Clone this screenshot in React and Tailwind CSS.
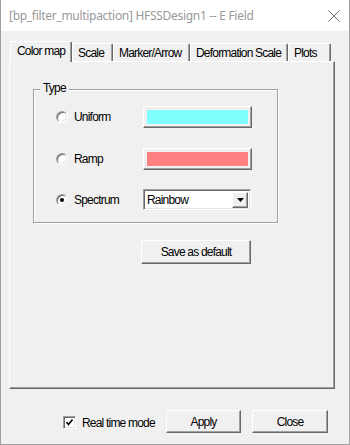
import React from "react";

const raised =
  "border-t border-l border-t-white border-l-white border-r border-b border-r-[#696969] border-b-[#696969] shadow-[inset_-1px_-1px_0_#a0a0a0]";

function Radio({ checked }) {
  return (
    <div className="w-[12px] h-[12px] rounded-full border border-t-[#a0a0a0] border-l-[#a0a0a0] border-b-white border-r-white bg-white shadow-[inset_1px_1px_0_#696969,inset_-1px_-1px_0_#e3e3e3] flex items-center justify-center shrink-0">
      {checked && <div className="w-[4px] h-[4px] rounded-full bg-black" />}
    </div>
  );
}

function ColorButton({ color }) {
  return (
    <div className={`w-[109px] h-[22px] bg-[#f0f0f0] p-[3px] ${raised}`}>
      <div className={`w-full h-full ${color}`} />
    </div>
  );
}

function Tab({ label, w, selected }) {
  if (selected) {
    return (
      <div
        className={`${w} h-[21px] -mb-[1px] relative z-10 bg-[#f0f0f0] border-t border-l border-white border-r border-r-[#696969] shadow-[inset_-1px_0_0_#a0a0a0] rounded-t-[2px] flex items-center pl-[6px] pb-[2px] whitespace-nowrap`}
      >
        {label}
      </div>
    );
  }
  return (
    <div
      className={`${w} h-[18px] bg-[#f0f0f0] border-t border-l border-white border-r border-r-[#696969] shadow-[inset_-1px_0_0_#a0a0a0] rounded-t-[2px] flex items-center pl-[5px] whitespace-nowrap overflow-hidden`}
    >
      {label}
    </div>
  );
}

export default function App() {
  return (
    <div
      className="w-[350px] h-[445px] bg-[#f0f0f0] border-l border-r border-b border-[#a0a0a0] flex flex-col text-[12px] tracking-[-0.8px] text-black overflow-hidden"
      style={{ fontFamily: '"Liberation Sans", Arial, sans-serif' }}
    >
      {/* Title bar */}
      <div className="h-[31px] bg-white flex items-center justify-between pl-[8px] pr-[8px] shrink-0">
        <span
          className="text-[12px] text-[#999999] tracking-[-0.3px]"
          style={{ fontFamily: '"Noto Sans", "Open Sans", sans-serif' }}
        >
          [bp_filter_multipaction] HFSSDesign1 -- E Field
        </span>
        <svg width="12" height="12" viewBox="0 0 12 12" className="mr-[1px]">
          <path d="M0.5 0.5 L11.5 11.5 M11.5 0.5 L0.5 11.5" stroke="#6b6b6b" strokeWidth="1" />
        </svg>
      </div>

      {/* Body */}
      <div className="flex flex-col pl-[8px] pt-[10px]">
        {/* Tabs */}
        <div className="flex items-end pl-[1px] h-[20px]">
          <Tab label="Color map" w="w-[62px]" selected />
          <Tab label="Scale" w="w-[41px]" />
          <Tab label="Marker/Arrow" w="w-[77px]" />
          <Tab label="Deformation Scale" w="w-[98px]" />
          <Tab label="Plots" w="w-[43px]" />
        </div>

        {/* Panel */}
        <div className={`w-[326px] h-[328px] flex flex-col pl-[23px] pt-[27px] ${raised}`}>
          {/* Group box */}
          <div className="relative w-[245px] h-[134px] border border-[#a0a0a0] shadow-[inset_1px_1px_0_#fff,1px_1px_0_#fff] flex flex-col pl-[22px]">
            <span className="absolute -top-[9px] left-[6px] bg-[#f0f0f0] px-[3px] leading-[15px]">
              Type
            </span>
            <div className="flex items-center h-[22px] mt-[16px]">
              <Radio />
              <span className="ml-[6px] w-[69px]">Uniform</span>
              <ColorButton color="bg-[#80ffff]" />
            </div>
            <div className="flex items-center h-[22px] mt-[20px]">
              <Radio />
              <span className="ml-[6px] w-[69px]">Ramp</span>
              <ColorButton color="bg-[#ff8080]" />
            </div>
            <div className="flex items-center h-[21px] mt-[19px]">
              <Radio checked />
              <span className="ml-[6px] w-[69px]">Spectrum</span>
              <div className="w-[108px] h-[21px] bg-white border border-t-[#a0a0a0] border-l-[#a0a0a0] border-b-white border-r-white shadow-[inset_1px_1px_0_#696969,inset_-1px_-1px_0_#e3e3e3] flex items-center justify-between pl-[3px] pr-[2px]">
                <span>Rainbow</span>
                <div className={`w-[16px] h-[16px] bg-[#f0f0f0] flex items-center justify-center ${raised}`}>
                  <svg width="7" height="4" viewBox="0 0 7 4">
                    <path d="M0 0 H7 L3.5 4 Z" fill="#000" />
                  </svg>
                </div>
              </div>
            </div>
          </div>

          {/* Save as default */}
          <div className="pl-[108px] mt-[17px]">
            <div className={`w-[110px] h-[24px] bg-[#f0f0f0] flex items-center justify-center ${raised}`}>
              Save as default
            </div>
          </div>
        </div>

        {/* Bottom row */}
        <div className="flex items-center mt-[21px] h-[23px]">
          <div className="ml-[54px] w-[13px] h-[13px] bg-white border border-t-[#a0a0a0] border-l-[#a0a0a0] border-b-white border-r-white shadow-[inset_1px_1px_0_#696969,inset_-1px_-1px_0_#e3e3e3] flex items-center justify-center mt-[2px]">
            <svg width="7" height="7" viewBox="0 0 7 7">
              <path d="M0.5 3 L2.5 5.5 L6.5 0.5" stroke="#000" strokeWidth="1.6" fill="none" />
            </svg>
          </div>
          <span className="ml-[6px] w-[84px] mt-[2px]">Real time mode</span>
          <div className={`w-[75px] h-[23px] bg-[#f0f0f0] flex items-center justify-center ${raised}`}>
            Apply
          </div>
          <div className={`ml-[11px] w-[76px] h-[23px] bg-[#f0f0f0] flex items-center justify-center ${raised}`}>
            Close
          </div>
        </div>
      </div>
    </div>
  );
}
